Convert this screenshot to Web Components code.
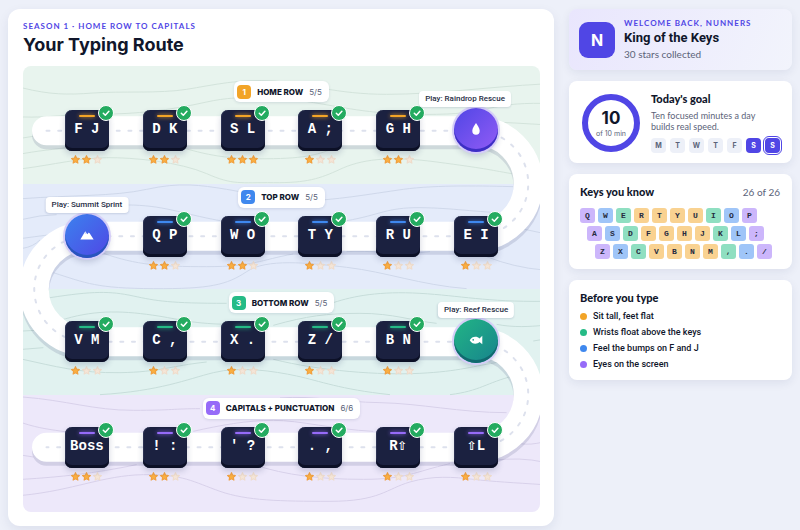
<!DOCTYPE html>
<html lang="en">
<head>
<meta charset="utf-8">
<meta name="viewport" content="width=device-width, initial-scale=1">
<title>Your Typing Route</title>
<style>
  :root {
    --ink: #10162b; --muted: #5b6379; --brand: #5046e5;
    --orange: #f2a427; --green: #25bb86; --blue: #3f88ee; --purple: #966bf8;
    --sans: Inter, "Liberation Sans", sans-serif;
    --head: Roboto, "Liberation Sans", sans-serif;
    --body: Lato, "Liberation Sans", sans-serif;
    --mono: "Liberation Mono", "DejaVu Sans Mono", monospace;
  }
  body { margin: 0; background: #edf0f9; color: var(--ink); font-family: var(--body); }
  .shift { font: 700 16px/16px "DejaVu Sans Mono", monospace; }
</style>
</head>
<body>
<typing-app>
  <typing-route slot="main">
    <route-row num="1" label="Home row" count="5/5" tone="orange">
      <route-key stars="2">F J</route-key><route-key stars="2">D K</route-key><route-key stars="3">S L</route-key><route-key stars="1">A ;</route-key><route-key stars="2">G H</route-key><game-node kind="drop" side="end">Play: Raindrop Rescue</game-node>
    </route-row>
    <route-row num="2" label="Top row" count="5/5" tone="blue">
      <game-node kind="peak">Play: Summit Sprint</game-node><route-key stars="2">Q P</route-key><route-key stars="2">W O</route-key><route-key stars="1">T Y</route-key><route-key stars="1">R U</route-key><route-key stars="1">E I</route-key>
    </route-row>
    <route-row num="3" label="Bottom row" count="5/5" tone="green">
      <route-key stars="1">V M</route-key><route-key stars="1">C ,</route-key><route-key stars="1">X .</route-key><route-key stars="1">Z /</route-key><route-key stars="1">B N</route-key><game-node kind="fish">Play: Reef Rescue</game-node>
    </route-row>
    <route-row num="4" label="Capitals + punctuation" count="6/6" tone="purple">
      <route-key stars="2">Boss</route-key><route-key stars="2">! :</route-key><route-key stars="1">' ?</route-key><route-key stars="1">. ,</route-key><route-key stars="1">R<span class="shift">⇧</span></route-key><route-key stars="1"><span class="shift">⇧</span>L</route-key>
    </route-row>
  </typing-route>
  <profile-card slot="side"></profile-card>
  <goal-card slot="side"></goal-card>
  <keys-card slot="side"></keys-card>
  <tips-card slot="side"></tips-card>
</typing-app>

<script>
const define = (name, render) => customElements.define(name, class extends HTMLElement {
  constructor() {
    super();
    this.attachShadow({ mode: 'open' });
  }
  connectedCallback() {
    const t = document.createElement('template');
    t.innerHTML = '<style>*{box-sizing:border-box}h1,h2,p,ul,ol{margin:0;padding:0;list-style:none}button{font:inherit;color:inherit;border:0;padding:0;cursor:pointer}</style>' + render(this);
    this.shadowRoot.replaceChildren(t.content.cloneNode(true));
  }
});

define('typing-app', () => `
<style>
  :host { display: grid; grid-template-columns: minmax(0, 1fr) 223px; gap: 15px; padding: 9px 8px 4px; min-height: 100vh; box-sizing: border-box; }
  main { display: grid; }
  aside { display: flex; flex-direction: column; gap: 11px; }
</style>
<main><slot name="main"></slot></main>
<aside><slot name="side"></slot></aside>`);

define('typing-route', () => `
<style>
  :host { display: flex; flex-direction: column; background: #fff; border-radius: 12px; padding: 12px 14px 14px 15px; box-shadow: 0 4px 12px #1c2a5a14; box-sizing: border-box; }
  .eyebrow { font: 700 8px/11px var(--body); letter-spacing: 1px; color: var(--brand); text-transform: uppercase; }
  h1 { font: 700 18px/25px var(--sans); margin-bottom: 9px; }
  .map { flex: 1; display: flex; flex-direction: column; position: relative; overflow: hidden; border-radius: 8px; padding: 12px 0; }
  svg { position: absolute; inset: 0; width: 100%; height: 100%; pointer-events: none; }
  .rows { position: relative; flex: 1; display: grid; grid-auto-rows: 1fr; }
  .lines path { fill: none; stroke-width: 3; }
</style>
<p class="eyebrow">Season 1 · Home row to capitals</p>
<h1>Your Typing Route</h1>
<div class="map">
  <svg viewBox="0 0 517 446" preserveAspectRatio="none" aria-hidden="true">
    <path fill="#e8f4ee" d="M0 0H517V118H0z"/><path fill="#e4ebfa" d="M0 118H517V223H0z"/>
    <path fill="#e1f2f0" d="M0 223H517V329H0z"/><path fill="#ede8fa" d="M0 329H517V446H0z"/>
    <g class="lines">
      <g transform="translate(-3 -4) scale(.3333)" stroke="#d3e3db">
        <path d="M8 78C90 98 140 99 220 93S420 95 500 82S660 50 760 57S950 97 1100 97S1400 75 1570 66"/>
        <path d="M8 165C80 168 160 155 250 156S450 145 560 120S800 108 900 125S1080 160 1250 157S1400 122 1570 124"/>
        <path d="M8 228Q80 215 140 210M1430 180L1570 188"/>
        <path d="M8 275C80 262 120 262 180 250M480 255C580 285 640 292 760 290S900 272 960 255"/>
        <path d="M8 320C100 308 180 288 260 287S480 300 560 335S660 361 760 362S900 350 960 322S1100 280 1250 300S1400 322 1475 335"/>
      </g>
      <g transform="translate(-3 114) scale(.3333)" stroke="#cfd8ea">
        <path d="M8 56C150 45 280 50 380 28S540 15 620 28S760 62 850 62S1050 42 1150 28S1400 18 1480 20"/>
        <path d="M8 118Q60 105 110 104M320 75C430 75 480 100 600 122M980 122C1080 105 1100 82 1200 83S1360 96 1480 100"/>
        <path d="M8 175Q80 165 130 160M8 205Q40 200 60 180M1500 145L1570 160"/>
        <path d="M250 220C350 255 420 260 560 260S720 240 820 222M980 215C1040 210 1160 225 1230 215M1400 230Q1480 262 1570 270"/>
        <path d="M100 278C200 310 230 325 400 326S620 315 680 275S860 248 980 262S1200 315 1340 326"/>
      </g>
      <g transform="translate(-3 220) scale(.3333)" stroke="#c7ddda">
        <path d="M90 35C220 15 270 15 340 30S450 52 620 52M940 50C1000 30 1080 15 1200 22S1400 48 1570 46"/>
        <path d="M100 110C200 75 280 72 380 85S500 112 620 115M760 118C860 90 920 82 1020 82S1180 105 1250 112M1430 115C1480 125 1530 122 1570 118"/>
        <path d="M8 135L110 130M8 190L70 185"/>
        <path d="M8 220C100 240 180 262 300 260S450 240 560 228M760 220C900 255 1080 268 1200 262S1360 240 1440 228M1540 165L1570 160"/>
        <path d="M240 326C420 315 500 280 580 260S760 255 830 270S960 310 1110 326M1290 326C1380 315 1400 290 1480 270"/>
      </g>
      <g transform="translate(-3 326) scale(.3333)" stroke="#d8d1ea">
        <path d="M8 15C140 25 220 55 340 55S460 50 540 50M780 18C880 10 960 30 1080 32S1320 62 1460 62"/>
        <path d="M8 93C60 110 90 112 140 120M520 118C600 100 680 85 760 85S940 112 1060 118"/>
        <path d="M8 190L40 195M1500 155Q1530 160 1570 150M1420 205Q1500 195 1570 210"/>
        <path d="M8 262C120 255 220 245 350 218M700 218C800 250 900 262 1030 262S1180 240 1290 215"/>
        <path d="M8 310C160 295 250 250 370 248S520 270 600 298S780 328 930 328S1100 290 1170 270S1300 255 1360 262S1480 272 1570 278"/>
      </g>
    </g>
    <g fill="none" stroke-linecap="round">
      <path transform="translate(0 4)" stroke="#1c2a5a" stroke-opacity=".13" stroke-width="29" d="M23.500 64.750H452.500a52.750 52.750 0 0 1 0 105.500H64a52.750 52.750 0 0 0 0 105.500H452.500a52.750 52.750 0 0 1 0 105.500H23.500"/>
      <path stroke="#fff" stroke-width="29" d="M23.500 64.750H452.500a52.750 52.750 0 0 1 0 105.500H64a52.750 52.750 0 0 0 0 105.500H452.500a52.750 52.750 0 0 1 0 105.500H23.500"/>
      <path stroke="#dde1ed" stroke-width="2" stroke-dasharray="3 8.700" d="M23.500 64.750H452.500a52.750 52.750 0 0 1 0 105.500H64a52.750 52.750 0 0 0 0 105.500H452.500a52.750 52.750 0 0 1 0 105.500H23.500"/>
    </g>
  </svg>
  <div class="rows"><slot></slot></div>
</div>`);

define('route-row', el => `
<style>
  :host { display: flex; flex-direction: column; align-items: center; justify-content: center; --tone: var(--${el.getAttribute('tone')}); }
  h2 { display: flex; align-items: center; gap: 6px; height: 21px; margin: 3px 0 8px; padding: 0 7px 0 3px; background: #fff; border-radius: 6px; box-shadow: 0 1px 3px #1c2a5a1f; font: 700 8px/10px var(--sans); text-transform: uppercase; white-space: nowrap; }
  .label { font-weight: 800; }
  .n { display: grid; place-items: center; width: 14px; height: 14px; border-radius: 4px; background: var(--tone); color: #fff; }
  .c { font-weight: 400; color: var(--muted); }
  .line { display: grid; grid-template-columns: repeat(6, minmax(0, 1fr)); width: 100%; padding: 0 25px; box-sizing: border-box; height: 73px; }
</style>
<h2><span class="n">${el.getAttribute('num')}</span><span class="label">${el.getAttribute('label')}</span><span class="c">${el.getAttribute('count')}</span></h2>
<div class="line"><slot></slot></div>`);

const star = on => `<svg viewBox="0 0 20 20" width="9" height="9"><path d="M10 1.500l2.600 5.500 6 .8-4.400 4.200 1.100 6L10 15.100 4.700 18l1.100-6L1.400 7.800l6-.8z" fill="${on ? '#fbb040' : '#f5e6d8'}" stroke="${on ? '#f0a040' : '#efdccb'}" stroke-width="2.500" stroke-linejoin="round"/></svg>`;

define('route-key', el => {
  const n = +el.getAttribute('stars');
  return `
<style>
  :host { display: flex; flex-direction: column; align-items: center; }
  button { position: relative; width: 44px; height: 41px; border-radius: 7px; background: #1b2140; color: #fff; box-shadow: inset 0 -3px #0c1026, inset 1px 0 #2b3152, 0 3px 6px #1c2a5a33; font: 700 14px/16px var(--mono); padding-bottom: 3px; white-space: pre; }
  .bar { position: absolute; left: 14px; top: 5px; width: 16px; height: 2px; border-radius: 1px; background: var(--tone); box-shadow: 0 0 4px var(--tone); }
  .ok { position: absolute; right: -5px; top: -5px; width: 16px; height: 16px; border-radius: 50%; background: #24ab60; border: 1px solid #fff; }
  .stars { display: flex; gap: 2px; margin-top: 4px; }
</style>
<button type="button"><span class="bar"></span><slot></slot><svg class="ok" viewBox="0 0 14 14" aria-hidden="true"><path d="M4.300 7.200l2 2 3.600-3.900" fill="none" stroke="#fff" stroke-width="1.500" stroke-linecap="round" stroke-linejoin="round"/></svg></button>
<div class="stars" role="img" aria-label="${n} of 3 stars">${[1, 2, 3].map(i => star(i <= n)).join('')}</div>`;
});

const games = {
  drop: ['linear-gradient(135deg,#5046e5,#935cf6)', '#3d2fc4', '<path d="M10 1.500C12 5 15.300 8.500 15.300 12.500a5.300 5.600 0 0 1-10.600 0C4.700 8.500 8 5 10 1.500z"/>'],
  peak: ['linear-gradient(135deg,#3b82ee,#5046e5)', '#2a55bd', '<path d="M.5 16.500L7.500 4.500l3 4.500 2-2.500 1.500 1.500 5.500 8.500z"/><path fill="#3f6ee8" d="M6 7.300L7.500 9l1.500-1 1 1-2.500-4.500z" opacity=".25"/>'],
  fish: ['linear-gradient(135deg,#22b585,#17838d)', '#11696f', '<path fill-rule="evenodd" d="M1 10.500C3 7 6 5.500 9 5.500c2.500 0 4.500 1 6 2.300L19 4v12l-4-3c-1.500 1.200-3.500 2.500-6 2.500-3 0-6-1.500-8-5zM6 8.500a1.200 1.200 0 1 0 0 2.400 1.200 1.200 0 0 0 0-2.400z"/>']
};
define('game-node', el => {
  const [bg, rim, art] = games[el.getAttribute('kind')];
  return `
<style>
  :host { display: flex; flex-direction: column; align-items: center; position: relative; }
  button { width: 44px; height: 44px; margin-top: -2px; border-radius: 50%; background: ${bg}; box-shadow: inset 0 -3px ${rim}, 0 0 0 2px #d5cdf8, 0 4px 6px #1c2a5a33; display: grid; place-items: center; padding-bottom: 2px; }
  .tip { position: absolute; bottom: 76px; ${el.getAttribute('side') === 'end' ? 'right: 4px' : 'left: 50%; transform: translateX(-50%)'}; background: #fff; border-radius: 4px; padding: 3px 6px; font: 500 8px/10px var(--head); color: #262d44; white-space: nowrap; box-shadow: 0 1px 2px #1c2a5a24; }
</style>
<span class="tip" id="tip"><slot></slot></span>
<button type="button" aria-labelledby="tip"><svg viewBox="0 0 20 20" width="14" height="14" fill="#fff" aria-hidden="true">${art}</svg></button>`;
});

const card = `
  :host { display: block; background: #fff; border-radius: 8px; box-shadow: 0 3px 10px #1c2a5a14; box-sizing: border-box; }
  h2 { font: 900 11px/14px var(--body); }`;

define('profile-card', () => `
<style>${card}
  :host { display: flex; align-items: center; gap: 9px; padding: 9px 10px; background: linear-gradient(110deg, #e9e6fd, #f2f4fc); }
  .avatar { display: grid; place-items: center; width: 36px; height: 36px; border-radius: 9px; background: var(--brand); color: #fff; font: 700 16px/20px var(--sans); }
  .eyebrow { font: 700 8px/11px var(--body); letter-spacing: 1px; color: var(--brand); text-transform: uppercase; }
  h2 { font: 700 13px/18px var(--head); }
  .sub { font: 400 10px/14px var(--body); color: var(--muted); }
</style>
<div class="avatar" aria-hidden="true">N</div>
<div><p class="eyebrow">Welcome back, Nunners</p><h2>King of the Keys</h2><p class="sub">30 stars collected</p></div>`);

define('goal-card', () => `
<style>${card}
  :host { display: flex; align-items: center; gap: 11px; padding: 11px 9px 10px 13px; }
  .ring { flex: none; width: 58px; height: 58px; border-radius: 50%; border: 6px solid var(--brand); display: flex; flex-direction: column; align-items: center; justify-content: center; }
  .ring b { font: 700 17px/21px var(--sans); }
  .ring span { font: 400 7px/9px var(--sans); color: var(--muted); }
  p { font: 400 9px/11px var(--body); color: var(--muted); margin: 4px 0 6px; }
  ul { display: flex; gap: 4px; }
  li { display: grid; place-items: center; width: 15px; height: 15px; border-radius: 4px; background: #edf0f8; color: var(--muted); font: 700 7px/8px var(--sans); }
  .on { background: var(--brand); color: #fff; }
  .today { outline: 1px solid var(--brand); outline-offset: 1px; }
</style>
<div class="ring"><b>10</b><span>of 10 min</span></div>
<div><h2>Today's goal</h2><p>Ten focused minutes a day<br>builds real speed.</p>
<ul><li>M</li><li>T</li><li>W</li><li>T</li><li>F</li><li class="on">S</li><li class="on today">S</li></ul></div>`);

const fingers = ['p', 'b', 'g', 'o', 'o', 'o', 'o', 'g', 'b', 'p'];
define('keys-card', () => `
<style>${card}
  :host { padding: 11px 12px 10px 11px; }
  header { display: flex; align-items: center; justify-content: space-between; margin-bottom: 9px; }
  header span { font: 400 10px/14px var(--body); color: var(--muted); }
  .keys { display: grid; gap: 3px; }
  .r { display: flex; gap: 3px; }
  .r:nth-child(2) { margin-left: 7px; }
  .r:nth-child(3) { margin-left: 15px; }
  .r span { display: grid; place-items: center; width: 15px; height: 15px; border-radius: 3px; font: 700 8px/9px var(--mono); color: #262b40; }
  .p { background: #ccb6fb; } .b { background: #9fc5f8; } .g { background: #8fdfc1; } .o { background: #f9d291; }
</style>
<header><h2>Keys you know</h2><span>26 of 26</span></header>
<div class="keys">${['QWERTYUIOP', 'ASDFGHJKL;', 'ZXCVBNM,./'].map(r => `<div class="r">${[...r].map((k, i) => `<span class="${fingers[i]}">${k}</span>`).join('')}</div>`).join('')}</div>`);

define('tips-card', () => `
<style>${card}
  :host { padding: 11px 11px 8px; }
  ul { margin-top: 3px; }
  li { display: flex; align-items: center; gap: 6px; font: 500 9px/16px var(--head); }
  li::before { content: ""; width: 7px; height: 7px; border-radius: 50%; background: var(--c); }
</style>
<h2>Before you type</h2>
<ul><li style="--c:var(--orange)">Sit tall, feet flat</li><li style="--c:var(--green)">Wrists float above the keys</li><li style="--c:var(--blue)">Feel the bumps on F and J</li><li style="--c:var(--purple)">Eyes on the screen</li></ul>`);
</script>
</body>
</html>
